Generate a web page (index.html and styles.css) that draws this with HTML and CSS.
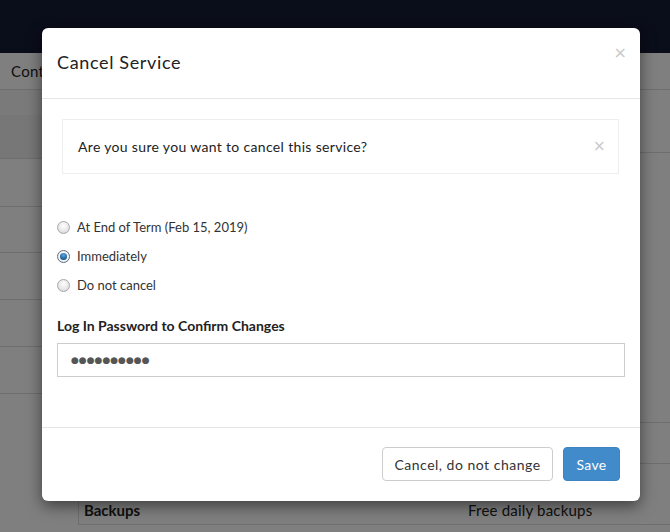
FILE: index.html
```html
<!DOCTYPE html>
<html>
<head>
<meta charset="utf-8">
<link rel="stylesheet" href="styles.css">
</head>
<body>
<div class="navbar"></div>
<div class="tabs"><span class="tab">Contact</span></div>
<div class="page">
  <div class="sidebar">
    <div class="srow band"></div>
    <div class="srow band2"></div>
    <div class="srow r48"></div>
    <div class="srow r46"></div>
    <div class="srow r47"></div>
    <div class="srow r47"></div>
    <div class="srow r47"></div>
  </div>
  <div class="main">
    <div class="mrow top"></div>
    <div class="mrow tall"></div>
    <div class="mrow r41"></div>
    <div class="box">
      <div class="boxrow"><span class="bname">Backups</span><span class="bval">Free daily backups</span></div>
    </div>
  </div>
</div>

<div class="overlay"></div>
<div class="modal">
  <div class="modal-header">
    <h4 class="modal-title">Cancel Service</h4>
    <span class="close">&times;</span>
  </div>
  <div class="modal-body">
    <div class="alert-wrap">
      <div class="alert">
        <span>Are you sure you want to cancel this service?</span>
        <span class="close small">&times;</span>
      </div>
    </div>
    <div class="options">
      <label class="opt"><span class="radio"></span>At End of Term (Feb 15, 2019)</label>
      <label class="opt"><span class="radio checked"></span>Immediately</label>
      <label class="opt"><span class="radio"></span>Do not cancel</label>
    </div>
    <div class="field">
      <div class="field-label">Log In Password to Confirm Changes</div>
      <div class="input"><span class="dots">&#9679;&#9679;&#9679;&#9679;&#9679;&#9679;&#9679;&#9679;&#9679;&#9679;</span></div>
    </div>
  </div>
  <div class="modal-footer">
    <button class="btn btn-default">Cancel, do not change</button>
    <button class="btn btn-primary">Save</button>
  </div>
</div>
</body>
</html>
```

FILE: styles.css
```css
* { box-sizing: border-box; }
html, body { margin: 0; padding: 0; }
body {
  width: 670px;
  height: 532px;
  overflow: hidden;
  background: #fff;
  font-family: "Lato", "Noto Sans", sans-serif;
  color: #333;
  position: relative;
}
.navbar { height: 53px; background: #141a34; }
.tabs {
  height: 37px;
  border-bottom: 1px solid #dcdcdc;
  padding-left: 11px;
  display: flex;
  align-items: center;
}
.tab { font-size: 15px; color: #222; letter-spacing: 0.3px; }
.page { display: flex; }
.sidebar { width: 78px; }
.srow { border-bottom: 1px solid #dcdcdc; }
.band { height: 25px; background: #f4f4f4; border-bottom: none; }
.band2 { height: 44px; background: #eeeeee; }
.r48 { height: 48px; }
.r46 { height: 46px; }
.r47 { height: 47px; }
.main { flex: 1; }
.mrow { border-bottom: 1px solid #dcdcdc; }
.mrow.top { height: 63px; }
.mrow.tall { height: 270px; }
.mrow.r41 { height: 41px; }
.box {
  border-left: 1px solid #dcdcdc;
  border-bottom: 1px solid #dcdcdc;
}
.boxrow {
  height: 60px;
  display: flex;
  align-items: flex-end;
  padding: 0 0 5px 5px;
  font-size: 15px;
  color: #222;
}
.bname { font-weight: bold; width: 384px; }
.bval { letter-spacing: 0.2px; }
.overlay {
  position: absolute;
  inset: 0;
  background: rgba(0,0,0,0.5);
}
.modal {
  position: absolute;
  left: 42px;
  top: 28px;
  width: 598px;
  height: 473px;
  background: #fff;
  border-radius: 6px;
  box-shadow: 0 5px 15px rgba(0,0,0,0.5);
  display: flex;
  flex-direction: column;
}
.modal-header {
  height: 71px;
  border-bottom: 1px solid #e5e5e5;
  padding: 0 15px;
  display: flex;
  align-items: center;
  justify-content: space-between;
}
.modal-title {
  margin: 0;
  font-size: 18px;
  font-weight: 400;
  color: #222;
  letter-spacing: 0.65px;
  position: relative;
  top: -1px;
}
.close {
  color: #c8c8c8;
  font-size: 16px;
  line-height: 1;
  font-family: "DejaVu Sans", sans-serif;
  align-self: flex-start;
  margin-top: 17px;
  margin-right: -2px;
}
.close.small { align-self: center; margin: 0 -3px 0 0; font-size: 15px; }
.modal-body {
  padding: 20px 15px 0;
  height: 329px;
  border-bottom: 1px solid #e5e5e5;
}
.alert-wrap { padding: 0 6px 0 5px; }
.alert {
  height: 55px;
  border: 1px solid #eeeeee;
  padding: 0 15px;
  display: flex;
  align-items: center;
  justify-content: space-between;
  font-size: 14px;
  color: #222;
  letter-spacing: 0.33px;
}
.options {
  margin-top: 43px;
  display: flex;
  flex-direction: column;
  gap: 9px;
}
.opt {
  display: flex;
  align-items: center;
  font-size: 13px;
  height: 20px;
  color: #333;
}
.radio {
  width: 13px;
  height: 13px;
  border-radius: 50%;
  border: 1px solid #a8a8a8;
  background: radial-gradient(circle at 50% 35%, #ffffff 0%, #e6e6e6 60%, #cfcfcf 100%);
  margin-right: 7px;
  position: relative;
  flex: none;
}
.radio.checked {
  border-color: #5c6e80;
  background: radial-gradient(circle at 50% 40%, #ffffff 0%, #e8e8e8 100%);
}
.radio.checked::after {
  content: "";
  position: absolute;
  left: 2px; top: 2px;
  width: 7px; height: 7px;
  border-radius: 50%;
  background: radial-gradient(circle at 50% 30%, #5aa6e0 0%, #1d5c96 70%, #123e68 100%);
}
.field { margin-top: 22px; }
.field-label {
  font-size: 14px;
  font-weight: bold;
  color: #222;
  margin-bottom: 9px;
}
.input {
  height: 34px;
  border: 1px solid #cccccc;
  padding: 0 13px;
  display: flex;
  align-items: center;
}
.dots {
  font-family: "DejaVu Sans", sans-serif;
  font-size: 9px;
  color: #555;
}
.modal-footer {
  flex: 1;
  padding: 19px 20px 0;
  display: flex;
  justify-content: flex-end;
  align-items: flex-start;
  gap: 10px;
}
.btn {
  height: 34px;
  font-family: inherit;
  font-size: 14px;
  border-radius: 4px;
  padding: 0 10px;
  cursor: pointer;
}
.btn-default {
  background: #fff;
  border: 1px solid #cccccc;
  color: #333;
  width: 171px;
  letter-spacing: 0.5px;
}
.btn-primary {
  background: #428bca;
  border: 1px solid #3d84c2;
  color: #fff;
  width: 57px;
  letter-spacing: 0.3px;
}
```
